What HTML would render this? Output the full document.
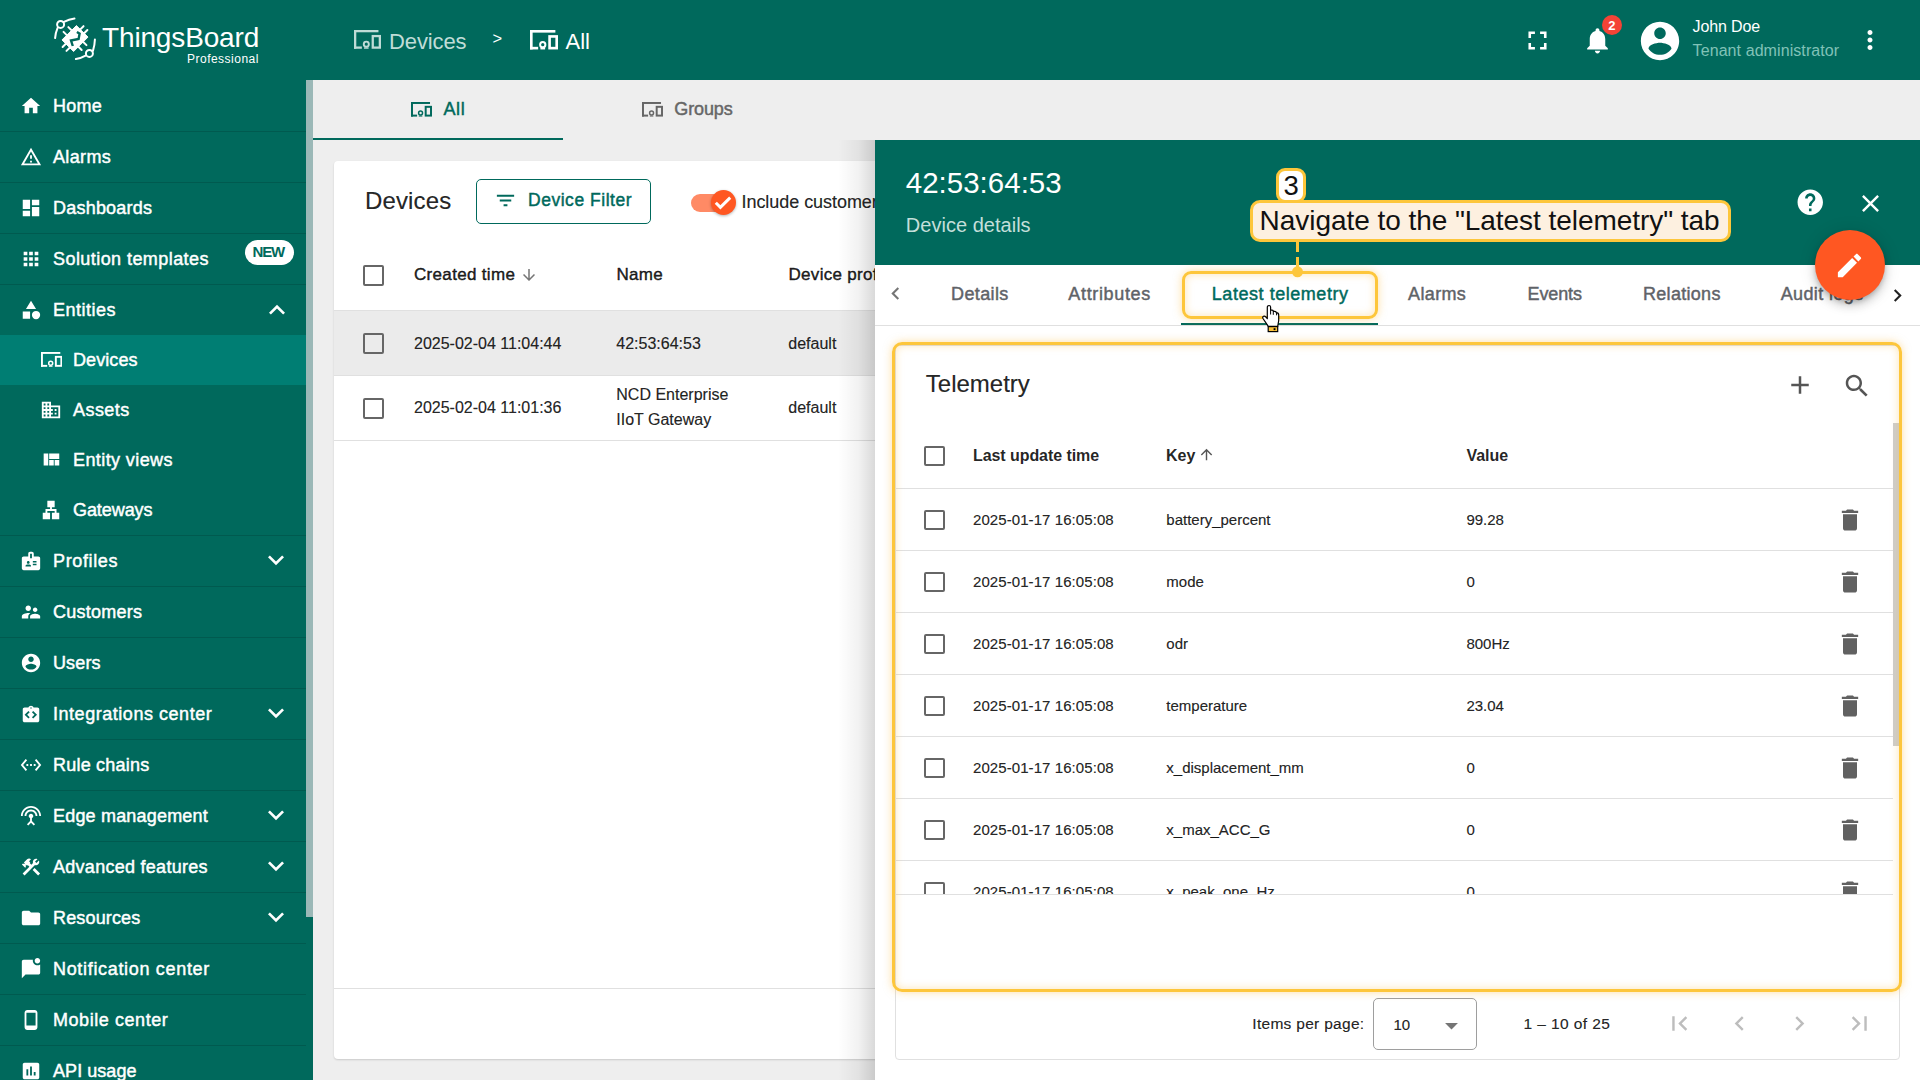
<!DOCTYPE html>
<html><head><meta charset="utf-8">
<style>
*{box-sizing:border-box;margin:0;padding:0}
html,body{width:1920px;height:1080px;overflow:hidden;background:#eeeeee;font-family:"Liberation Sans",sans-serif;color:rgba(0,0,0,.87)}
.abs{position:absolute}
svg{display:block}
.t{position:absolute;white-space:nowrap;line-height:1}
.m{-webkit-text-stroke:0.45px currentColor}
.m2{-webkit-text-stroke:0.2px currentColor}
.cb{position:absolute;border:2px solid #666;border-radius:2px;background:#fff}
</style></head><body>

<div class="abs" style="left:0px;top:0px;width:1920px;height:80px;background:#00695c;"></div>
<svg class="abs" style="left:50px;top:14px" width="50" height="50" viewBox="50 14 50 50">
<g fill="none" stroke="#fff" stroke-width="2" stroke-linecap="round">
<circle cx="60.6" cy="24.4" r="3.5"/><path d="M63.9 21.9Q69 19.3 74.5 18.6"/><path d="M57.6 27.9Q55.6 32.5 55.1 38.1"/>
<circle cx="89.4" cy="53.4" r="3.5"/><path d="M85.6 55.7Q81 58.3 75.9 59.1"/><path d="M93 50.6Q94.7 45.3 94.9 39.5"/>
<path d="M67.51 35.84L63.55 31.88M72.31 31.07L68.35 27.11M79.56 30.14L83.52 26.18M83.43 33.97L87.39 30.01M82.49 41.19L86.45 45.15M77.69 45.99L81.65 49.95M70.44 46.93L66.48 50.89M66.57 43.06L62.61 47.02"/>
</g>
<polygon points="76.4,25.6 88,37.1 73.6,51.5 62,39.9" fill="#fff" stroke="#fff" stroke-width="1" stroke-linejoin="round"/>
<path d="M76.9 32L79.6 33.6L78.6 39L71 40.5L72.8 46" fill="none" stroke="#00695c" stroke-width="2.4"/>
</svg>
<div class="t " style="left:102px;top:24.00px;font-size:28px;color:#fff;font-weight:400;letter-spacing:-0.149px;">ThingsBoard</div>
<div class="t " style="left:187px;top:52.54px;font-size:12px;color:#fff;font-weight:400;letter-spacing:0.485px;">Professional</div>
<svg class="abs" style="left:354px;top:30.2px" width="27" height="18.76" viewBox="0 0 21.3 14.8"><g fill="#bfdcd7"><rect x="0" y="0" width="19.3" height="1.8"/><rect x="0" y="0" width="1.8" height="14.8"/><rect x="0" y="13.0" width="6.2" height="1.8"/><rect x="7.9" y="13.7" width="3.6" height="1.1"/></g><g fill="none" stroke="#bfdcd7" stroke-width="1.8"><rect x="14.8" y="4.8" width="5.6000000000000005" height="9.1"/><circle cx="9.7" cy="11.2" r="2.0" stroke-width="1.5"/></g></svg>
<div class="t " style="left:389px;top:30.78px;font-size:22px;color:#bfdcd7;font-weight:400;letter-spacing:-0.124px;">Devices</div>
<div class="t " style="left:492.5px;top:30.23px;font-size:16.5px;color:#fff;font-weight:400;">&gt;</div>
<svg class="abs" style="left:530.2px;top:30.2px" width="28" height="19.46" viewBox="0 0 21.3 14.8"><g fill="#fff"><rect x="0" y="0" width="19.3" height="2"/><rect x="0" y="0" width="2" height="14.8"/><rect x="0" y="12.8" width="6.2" height="2"/><rect x="7.9" y="13.7" width="3.6" height="1.1"/></g><g fill="none" stroke="#fff" stroke-width="2"><rect x="14.9" y="4.9" width="5.4" height="8.9"/><circle cx="9.7" cy="11.2" r="2.0" stroke-width="1.5"/></g></svg>
<div class="t " style="left:565.5px;top:30.78px;font-size:22px;color:#fff;font-weight:400;">All</div>
<svg class="abs" style="left:1522px;top:24.7px" width="31" height="31" viewBox="0 0 24 24" ><path fill="#fff" d="M7 14H5v5h5v-2H7v-3zm-2-4h2V7h3V5H5v5zm12 7h-3v2h5v-5h-2v3zM14 5v2h3v3h2V5h-5z"/></svg>
<svg class="abs" style="left:1582px;top:24.6px" width="31" height="31" viewBox="0 0 24 24" ><path fill="#fff" d="M12 22c1.1 0 2-.9 2-2h-4c0 1.1.89 2 2 2zm6-6v-5c0-3.07-1.64-5.64-4.5-6.32V4c0-.83-.67-1.5-1.5-1.5s-1.5.67-1.5 1.5v.68C7.63 5.36 6 7.920 6 11v5l-2 2v1h16v-1l-2-2z"/></svg>
<div class="abs" style="left:1602px;top:15px;width:20px;height:20px;background:#f44336;border-radius:50%"></div>
<div class="t " style="left:1608.2px;top:19.00px;font-size:13px;color:#fff;font-weight:700;">2</div>
<svg class="abs" style="left:1637px;top:18px" width="46" height="46" viewBox="0 0 24 24" ><path fill="#fff" d="M12 2C6.48 2 2 6.48 2 12s4.48 10 10 10 10-4.48 10-10S17.52 2 12 2zm0 3c1.66 0 3 1.34 3 3s-1.34 3-3 3-3-1.34-3-3 1.34-3 3-3zm0 14.2c-2.5 0-4.71-1.28-6-3.22.03-1.99 4-3.08 6-3.08 1.99 0 5.97 1.09 6 3.08-1.29 1.94-3.5 3.22-6 3.22z"/></svg>
<div class="t " style="left:1692.6px;top:19.36px;font-size:16px;color:#fff;font-weight:400;letter-spacing:-0.142px;">John Doe</div>
<div class="t " style="left:1692.6px;top:43.21px;font-size:16px;color:#80c2b7;font-weight:400;letter-spacing:0.082px;">Tenant administrator</div>
<svg class="abs" style="left:1855px;top:25px" width="30" height="30" viewBox="0 0 24 24" ><path fill="#fff" d="M12 8c1.1 0 2-.9 2-2s-.9-2-2-2-2 .9-2 2 .9 2 2 2zm0 2c-1.1 0-2 .9-2 2s.9 2 2 2 2-.9 2-2-.9-2-2-2zm0 6c-1.1 0-2 .9-2 2s.9 2 2 2 2-.9 2-2-.9-2-2-2z"/></svg>
<div class="abs" style="left:0px;top:80px;width:306px;height:1000px;background:#00695c;"></div>
<div class="abs" style="left:306px;top:80px;width:7px;height:1000px;background:#00695c;"></div>
<div class="abs" style="left:306px;top:80px;width:7px;height:837px;background:#9bb8b7;"></div>
<div class="abs" style="left:0px;top:335px;width:306px;height:50px;background:#007e73;"></div>
<div class="abs" style="left:0px;top:131px;width:306px;height:1px;background:rgba(0,0,0,.14);"></div>
<div class="abs" style="left:0px;top:182px;width:306px;height:1px;background:rgba(0,0,0,.14);"></div>
<div class="abs" style="left:0px;top:233px;width:306px;height:1px;background:rgba(0,0,0,.14);"></div>
<div class="abs" style="left:0px;top:284px;width:306px;height:1px;background:rgba(0,0,0,.14);"></div>
<div class="abs" style="left:0px;top:535px;width:306px;height:1px;background:rgba(0,0,0,.14);"></div>
<div class="abs" style="left:0px;top:586px;width:306px;height:1px;background:rgba(0,0,0,.14);"></div>
<div class="abs" style="left:0px;top:637px;width:306px;height:1px;background:rgba(0,0,0,.14);"></div>
<div class="abs" style="left:0px;top:688px;width:306px;height:1px;background:rgba(0,0,0,.14);"></div>
<div class="abs" style="left:0px;top:739px;width:306px;height:1px;background:rgba(0,0,0,.14);"></div>
<div class="abs" style="left:0px;top:790px;width:306px;height:1px;background:rgba(0,0,0,.14);"></div>
<div class="abs" style="left:0px;top:841px;width:306px;height:1px;background:rgba(0,0,0,.14);"></div>
<div class="abs" style="left:0px;top:892px;width:306px;height:1px;background:rgba(0,0,0,.14);"></div>
<div class="abs" style="left:0px;top:943px;width:306px;height:1px;background:rgba(0,0,0,.14);"></div>
<div class="abs" style="left:0px;top:994px;width:306px;height:1px;background:rgba(0,0,0,.14);"></div>
<div class="abs" style="left:0px;top:1045px;width:306px;height:1px;background:rgba(0,0,0,.14);"></div>
<svg class="abs" style="left:20px;top:94.5px" width="22" height="22" viewBox="0 0 24 24" ><path fill="#fff" d="M10 20v-6h4v6h5v-8h3L12 3 2 12h3v8z"/></svg>
<div class="t m" style="left:53px;top:96.76px;font-size:18px;color:#fff;font-weight:400;letter-spacing:0.265px;">Home</div>
<svg class="abs" style="left:20px;top:145.5px" width="22" height="22" viewBox="0 0 24 24" ><path fill="#fff" d="M12 5.99L19.53 19H4.47L12 5.99M12 2L1 21h22L12 2zm1 14h-2v2h2v-2zm0-6h-2v4h2v-4z"/></svg>
<div class="t m" style="left:53px;top:147.76px;font-size:18px;color:#fff;font-weight:400;letter-spacing:0.349px;">Alarms</div>
<svg class="abs" style="left:20px;top:196.5px" width="22" height="22" viewBox="0 0 24 24" ><path fill="#fff" d="M3 13h8V3H3v10zm0 8h8v-6H3v6zm10 0h8V11h-8v10zm0-18v6h8V3h-8z"/></svg>
<div class="t m" style="left:53px;top:198.76px;font-size:18px;color:#fff;font-weight:400;letter-spacing:0.216px;">Dashboards</div>
<svg class="abs" style="left:20px;top:247.5px" width="22" height="22" viewBox="0 0 24 24" ><path fill="#fff" d="M4 8h4V4H4v4zm6 12h4v-4h-4v4zm-6 0h4v-4H4v4zm0-6h4v-4H4v4zm6 0h4v-4h-4v4zm6-10v4h4V4h-4zm-6 4h4V4h-4v4zm6 6h4v-4h-4v4zm0 6h4v-4h-4v4z"/></svg>
<div class="t m" style="left:53px;top:249.76px;font-size:18px;color:#fff;font-weight:400;letter-spacing:0.436px;">Solution templates</div>
<svg class="abs" style="left:20px;top:298.5px" width="22" height="22" viewBox="0 0 24 24" ><path fill="#fff" d="M12 2l-5.5 9h11zM17.5 13a4.5 4.5 0 1 0 0 9a4.5 4.5 0 1 0 0-9zM3 13.5h8v8H3z"/></svg>
<div class="t m" style="left:53px;top:300.76px;font-size:18px;color:#fff;font-weight:400;letter-spacing:0.496px;">Entities</div>
<svg class="abs" style="left:40.6px;top:352.2px" width="21.3" height="14.80" viewBox="0 0 21.3 14.8"><g fill="#fff"><rect x="0" y="0" width="19.3" height="1.9"/><rect x="0" y="0" width="1.9" height="14.8"/><rect x="0" y="12.9" width="6.2" height="1.9"/><rect x="7.9" y="13.7" width="3.6" height="1.1"/></g><g fill="none" stroke="#fff" stroke-width="1.9"><rect x="14.85" y="4.85" width="5.5" height="9.0"/><circle cx="9.7" cy="11.2" r="2.0" stroke-width="1.5"/></g></svg>
<div class="t m" style="left:73px;top:351.26px;font-size:18px;color:#fff;font-weight:400;letter-spacing:0.080px;">Devices</div>
<svg class="abs" style="left:40px;top:399.0px" width="22" height="22" viewBox="0 0 24 24" ><path fill="#fff" d="M12 7V3H2v18h20V7H12zM6 19H4v-2h2v2zm0-4H4v-2h2v2zm0-4H4V9h2v2zm0-4H4V5h2v2zm4 12H8v-2h2v2zm0-4H8v-2h2v2zm0-4H8V9h2v2zm0-4H8V5h2v2zm10 12h-8v-2h2v-2h-2v-2h2v-2h-2V9h8v10zm-2-8h-2v2h2v-2zm0 4h-2v2h2v-2z"/></svg>
<div class="t m" style="left:73px;top:401.26px;font-size:18px;color:#fff;font-weight:400;letter-spacing:0.446px;">Assets</div>
<svg class="abs" style="left:40px;top:449.0px" width="22" height="22" viewBox="0 0 24 24" ><path fill="#fff" d="M10 18h5v-6h-5v6zm-6 0h5V5H4v13zm12 0h5v-6h-5v6zM10 5v6h11V5H10z"/></svg>
<div class="t m" style="left:73px;top:451.26px;font-size:18px;color:#fff;font-weight:400;letter-spacing:0.407px;">Entity views</div>
<svg class="abs" style="left:40px;top:499.0px" width="22" height="22" viewBox="0 0 24 24" ><path fill="#fff" d="M13 22h8v-7h-3v-4h-5V9h3V2H8v7h3v2H6v4H3v7h8v-7H8v-2h8v2h-3z"/></svg>
<div class="t m" style="left:73px;top:501.26px;font-size:18px;color:#fff;font-weight:400;letter-spacing:-0.076px;">Gateways</div>
<svg class="abs" style="left:20px;top:549.5px" width="22" height="22" viewBox="0 0 24 24" ><path fill="#fff" d="M20 7h-5V4c0-1.1-.9-2-2-2h-2c-1.1 0-2 .9-2 2v3H4c-1.1 0-2 .9-2 2v11c0 1.1.9 2 2 2h16c1.1 0 2-.9 2-2V9c0-1.1-.9-2-2-2zM9 12c.83 0 1.5.67 1.5 1.5S9.830 15 9 15s-1.5-.67-1.5-1.5S8.17 12 9 12zm3 6H6v-.43c0-.6.36-1.15.92-1.39.64-.28 1.34-.43 2.08-.43s1.44.15 2.08.43c.55.24.92.78.92 1.39V18zm1-9h-2V4h2v5zm5 7.5h-4V15h4v1.5zm0-3h-4V12h4v1.5z"/></svg>
<div class="t m" style="left:53px;top:551.76px;font-size:18px;color:#fff;font-weight:400;letter-spacing:0.640px;">Profiles</div>
<svg class="abs" style="left:20px;top:600.5px" width="22" height="22" viewBox="0 0 24 24" ><path fill="#fff" d="M16.5 12c1.38 0 2.49-1.12 2.49-2.5S17.88 7 16.5 7C15.12 7 14 8.12 14 9.5s1.12 2.5 2.5 2.5zM9 11c1.66 0 2.99-1.34 2.99-3S10.66 5 9 5C7.34 5 6 6.34 6 8s1.34 3 3 3zm7.5 3c-1.83 0-5.5.92-5.5 2.75V19h11v-2.25c0-1.83-3.67-2.75-5.5-2.75zM9 13c-2.33 0-7 1.17-7 3.5V19h7v-2.25c0-.85.33-2.34 2.37-3.47C10.5 13.1 9.66 13 9 13z"/></svg>
<div class="t m" style="left:53px;top:602.76px;font-size:18px;color:#fff;font-weight:400;letter-spacing:0.247px;">Customers</div>
<svg class="abs" style="left:20px;top:651.5px" width="22" height="22" viewBox="0 0 24 24" ><path fill="#fff" d="M12 2C6.48 2 2 6.48 2 12s4.48 10 10 10 10-4.48 10-10S17.52 2 12 2zm0 3c1.66 0 3 1.34 3 3s-1.34 3-3 3-3-1.34-3-3 1.34-3 3-3zm0 14.2c-2.5 0-4.71-1.28-6-3.22.03-1.99 4-3.08 6-3.08 1.99 0 5.97 1.09 6 3.08-1.29 1.94-3.5 3.22-6 3.22z"/></svg>
<div class="t m" style="left:53px;top:653.76px;font-size:18px;color:#fff;font-weight:400;letter-spacing:0.124px;">Users</div>
<svg class="abs" style="left:20px;top:702.5px" width="22" height="22" viewBox="0 0 24 24" ><path fill="#fff" d="M19 5h-4.18C14.4 3.84 13.3 3 12 3s-2.4.84-2.82 2H5c-1.1 0-2 .9-2 2v12c0 1.1.9 2 2 2h14c1.1 0 2-.9 2-2V7c0-1.1-.9-2-2-2zm-7-.25c.41 0 .75.34.75.75s-.34.75-.75.75-.75-.34-.75-.75.34-.75.75-.75zM10.6 15.6L9.2 17 5 12.8l0 0L9.2 8.6l1.4 1.4-2.8 2.8 2.8 2.8zm3.8 1.4L13 15.6l2.8-2.8L13 10l1.4-1.4 4.2 4.2L14.4 17z"/></svg>
<div class="t m" style="left:53px;top:704.76px;font-size:18px;color:#fff;font-weight:400;letter-spacing:0.536px;">Integrations center</div>
<svg class="abs" style="left:20px;top:753.5px" width="22" height="22" viewBox="0 0 24 24" ><path fill="#fff" d="M7.77 6.76L6.23 5.48.82 12l5.41 6.52 1.54-1.28L3.42 12l4.35-5.24zM7 13h2v-2H7v2zm10-2h-2v2h2v-2zm-6 2h2v-2h-2v2zm6.77-7.52l-1.54 1.28L20.58 12l-4.35 5.24 1.54 1.28L23.18 12l-5.41-6.52z"/></svg>
<div class="t m" style="left:53px;top:755.76px;font-size:18px;color:#fff;font-weight:400;letter-spacing:0.220px;">Rule chains</div>
<svg class="abs" style="left:20px;top:804.5px" width="22" height="22" viewBox="0 0 24 24" ><path fill="#fff" d="M12 5c-3.87 0-7 3.13-7 7h2c0-2.76 2.24-5 5-5s5 2.24 5 5h2c0-3.87-3.13-7-7-7zm1 9.29c.88-.39 1.5-1.26 1.5-2.29 0-1.38-1.12-2.5-2.5-2.5S9.5 10.62 9.5 12c0 1.02.62 1.9 1.5 2.29v3.3L7.59 21 9 22.41l3-3 3 3L16.41 21 13 17.59v-3.3zM12 1C5.93 1 1 5.93 1 12h2c0-4.97 4.03-9 9-9s9 4.03 9 9h2c0-6.07-4.93-11-11-11z"/></svg>
<div class="t m" style="left:53px;top:806.76px;font-size:18px;color:#fff;font-weight:400;letter-spacing:0.189px;">Edge management</div>
<svg class="abs" style="left:20px;top:855.5px" width="22" height="22" viewBox="0 0 24 24" ><path fill="#fff" d="M13.783 15.172l2.121-2.121 5.996 5.996-2.121 2.121zM17.5 10c1.93 0 3.5-1.57 3.5-3.5 0-.58-.16-1.12-.41-1.6l-2.7 2.7-1.49-1.490 2.7-2.7c-.48-.25-1.02-.41-1.6-.41C15.57 3 14 4.570 14 6.5c0 .41.08.8.21 1.16l-1.85 1.85-1.78-1.78.71-.71-1.41-1.41L12 3.49c-1.17-1.17-3.07-1.17-4.24 0L4.22 7.03l1.41 1.41H2.810l-.71.71 3.54 3.54.71-.71V9.15l1.41 1.41.71-.71 1.78 1.78-7.41 7.41 2.12 2.12L16.34 9.79c.36.13.75.21 1.16.21z"/></svg>
<div class="t m" style="left:53px;top:857.76px;font-size:18px;color:#fff;font-weight:400;letter-spacing:0.275px;">Advanced features</div>
<svg class="abs" style="left:20px;top:906.5px" width="22" height="22" viewBox="0 0 24 24" ><path fill="#fff" d="M10 4H4c-1.1 0-1.99.9-1.99 2L2 18c0 1.1.9 2 2 2h16c1.1 0 2-.9 2-2V8c0-1.1-.9-2-2-2h-8l-2-2z"/></svg>
<div class="t m" style="left:53px;top:908.76px;font-size:18px;color:#fff;font-weight:400;letter-spacing:0.152px;">Resources</div>
<svg class="abs" style="left:20px;top:957.5px" width="22" height="22" viewBox="0 0 24 24" ><path fill="#fff" d="M22 6.98V16c0 1.1-.9 2-2 2H6l-4 4V4c0-1.1.9-2 2-2h10.1c-.06.32-.1.66-.1 1 0 2.76 2.24 5 5 5 1.13 0 2.16-.39 3-1.02zM16 3c0 1.66 1.34 3 3 3s3-1.34 3-3-1.34-3-3-3-3 1.34-3 3z"/></svg>
<div class="t m" style="left:53px;top:959.76px;font-size:18px;color:#fff;font-weight:400;letter-spacing:0.676px;">Notification center</div>
<svg class="abs" style="left:20px;top:1008.5px" width="22" height="22" viewBox="0 0 24 24" ><path fill="#fff" d="M16 1H8C6.34 1 5 2.34 5 4v16c0 1.66 1.34 3 3 3h8c1.66 0 3-1.34 3-3V4c0-1.66-1.34-3-3-3zm1 17H7V4h10v14z"/></svg>
<div class="t m" style="left:53px;top:1010.76px;font-size:18px;color:#fff;font-weight:400;letter-spacing:0.558px;">Mobile center</div>
<svg class="abs" style="left:20px;top:1059.5px" width="22" height="22" viewBox="0 0 24 24" ><path fill="#fff" d="M19 3H5c-1.1 0-2 .9-2 2v14c0 1.1.9 2 2 2h14c1.1 0 2-.9 2-2V5c0-1.1-.9-2-2-2zM9 17H7v-7h2v7zm4 0h-2V7h2v10zm4 0h-2v-4h2v4z"/></svg>
<div class="t m" style="left:53px;top:1061.76px;font-size:18px;color:#fff;font-weight:400;letter-spacing:0.057px;">API usage</div>
<svg class="abs" style="left:261px;top:293.9px" width="32" height="32" viewBox="0 0 24 24" ><path fill="#fff" d="M12 8l-6 6 1.41 1.41L12 10.83l4.59 4.58L18 14z"/></svg>
<svg class="abs" style="left:259.5px;top:544.1px" width="32" height="32" viewBox="0 0 24 24" ><path fill="#fff" d="M16.59 8.59L12 13.17 7.41 8.59 6 10l6 6 6-6z"/></svg>
<svg class="abs" style="left:259.5px;top:697.1px" width="32" height="32" viewBox="0 0 24 24" ><path fill="#fff" d="M16.59 8.59L12 13.17 7.41 8.59 6 10l6 6 6-6z"/></svg>
<svg class="abs" style="left:259.5px;top:799.1px" width="32" height="32" viewBox="0 0 24 24" ><path fill="#fff" d="M16.59 8.59L12 13.17 7.41 8.59 6 10l6 6 6-6z"/></svg>
<svg class="abs" style="left:259.5px;top:850.1px" width="32" height="32" viewBox="0 0 24 24" ><path fill="#fff" d="M16.59 8.59L12 13.17 7.41 8.59 6 10l6 6 6-6z"/></svg>
<svg class="abs" style="left:259.5px;top:901.1px" width="32" height="32" viewBox="0 0 24 24" ><path fill="#fff" d="M16.59 8.59L12 13.17 7.41 8.59 6 10l6 6 6-6z"/></svg>
<div class="abs" style="left:244.5px;top:239.5px;width:49px;height:25px;background:#fff;border-radius:13px"></div>
<div class="t " style="left:252.5px;top:244.40px;font-size:15px;color:#00695c;font-weight:700;letter-spacing:-1.169px;">NEW</div>
<div class="abs" style="left:313px;top:80px;width:1607px;height:60px;background:#eeeeee;"></div>
<svg class="abs" style="left:411px;top:102px" width="21" height="14.59" viewBox="0 0 21.3 14.8"><g fill="#00695c"><rect x="0" y="0" width="19.3" height="2"/><rect x="0" y="0" width="2" height="14.8"/><rect x="0" y="12.8" width="6.2" height="2"/><rect x="7.9" y="13.7" width="3.6" height="1.1"/></g><g fill="none" stroke="#00695c" stroke-width="2"><rect x="14.9" y="4.9" width="5.4" height="8.9"/><circle cx="9.7" cy="11.2" r="2.0" stroke-width="1.5"/></g></svg>
<div class="t m" style="left:443.4px;top:99.76px;font-size:18px;color:#00695c;font-weight:400;letter-spacing:0.698px;">All</div>
<div class="abs" style="left:313px;top:138px;width:250px;height:2px;background:#00695c;"></div>
<svg class="abs" style="left:642px;top:102px" width="21" height="14.59" viewBox="0 0 21.3 14.8"><g fill="#666"><rect x="0" y="0" width="19.3" height="2"/><rect x="0" y="0" width="2" height="14.8"/><rect x="0" y="12.8" width="6.2" height="2"/><rect x="7.9" y="13.7" width="3.6" height="1.1"/></g><g fill="none" stroke="#666" stroke-width="2"><rect x="14.9" y="4.9" width="5.4" height="8.9"/><circle cx="9.7" cy="11.2" r="2.0" stroke-width="1.5"/></g></svg>
<div class="t m" style="left:674.3px;top:99.76px;font-size:18px;color:#666;font-weight:400;letter-spacing:-0.125px;">Groups</div>
<div class="abs" style="left:334px;top:161px;width:1600px;height:898px;background:#fff;border-radius:4px;box-shadow:0 1px 2px rgba(0,0,0,.15)"></div>
<div class="t m2" style="left:365px;top:188.88px;font-size:24px;color:rgba(0,0,0,.87);font-weight:400;letter-spacing:0.140px;">Devices</div>
<div class="abs" style="left:476px;top:179px;width:175px;height:45px;border:1.3px solid #00695c;border-radius:5px"></div>
<svg class="abs" style="left:494px;top:189px" width="23" height="23" viewBox="0 0 24 24" ><path fill="#00695c" d="M10 18h4v-2h-4v2zM3 6v2h18V6H3zm3 7h12v-2H6v2z"/></svg>
<div class="t m" style="left:528px;top:191.99px;font-size:17.5px;color:#00695c;font-weight:400;letter-spacing:0.524px;">Device Filter</div>
<div class="abs" style="left:691px;top:194px;width:36px;height:18px;background:#ff8a65;border-radius:9px"></div>
<div class="abs" style="left:711px;top:190px;width:25px;height:25px;background:#ff5722;border-radius:50%;box-shadow:0 1px 3px rgba(0,0,0,.3)"></div>
<svg class="abs" style="left:711px;top:190px" width="25" height="25" viewBox="0 0 25 25"><path d="M4.8 12.8l4.6 4.6 9.8-9.8" fill="none" stroke="#fff" stroke-width="3"/></svg>
<div class="t m2" style="left:741.5px;top:192.66px;font-size:18px;color:rgba(0,0,0,.87);font-weight:400;letter-spacing:-0.050px;">Include customer devices</div>
<div class="cb" style="left:363px;top:265px;width:21px;height:21px"></div>
<div class="t m" style="left:414px;top:266.21px;font-size:17px;color:rgba(0,0,0,.87);font-weight:400;letter-spacing:0.321px;">Created time</div>
<svg class="abs" style="left:520px;top:266px" width="18" height="18" viewBox="0 0 24 24" ><path fill="#757575" d="M20 12l-1.41-1.41L13 16.17V4h-2v12.17l-5.58-5.59L4 12l8 8 8-8z"/></svg>
<div class="t m" style="left:616.5px;top:266.21px;font-size:17px;color:rgba(0,0,0,.87);font-weight:400;letter-spacing:0.300px;">Name</div>
<div class="t m" style="left:788.5px;top:266.21px;font-size:17px;color:rgba(0,0,0,.87);font-weight:400;letter-spacing:0.300px;">Device profile</div>
<div class="abs" style="left:334px;top:310px;width:600px;height:1px;background:#e0e0e0;"></div>
<div class="abs" style="left:334px;top:311px;width:600px;height:64px;background:#ebebeb;"></div>
<div class="abs" style="left:334px;top:375px;width:600px;height:1px;background:#e0e0e0;"></div>
<div class="abs" style="left:334px;top:440px;width:600px;height:1px;background:#e0e0e0;"></div>
<div class="cb" style="left:363px;top:333px;width:21px;height:21px;background:transparent"></div>
<div class="cb" style="left:363px;top:398px;width:21px;height:21px"></div>
<div class="t m2" style="left:414px;top:335.71px;font-size:16px;color:rgba(0,0,0,.87);font-weight:400;">2025-02-04 11:04:44</div>
<div class="t m2" style="left:616.3px;top:335.71px;font-size:16px;color:rgba(0,0,0,.87);font-weight:400;">42:53:64:53</div>
<div class="t m2" style="left:788.3px;top:335.71px;font-size:16px;color:rgba(0,0,0,.87);font-weight:400;">default</div>
<div class="t m2" style="left:414px;top:400.21px;font-size:16px;color:rgba(0,0,0,.87);font-weight:400;">2025-02-04 11:01:36</div>
<div class="t m2" style="left:616.3px;top:387.21px;font-size:16px;color:rgba(0,0,0,.87);font-weight:400;">NCD Enterprise</div>
<div class="t m2" style="left:616.3px;top:411.96px;font-size:16px;color:rgba(0,0,0,.87);font-weight:400;">IIoT Gateway</div>
<div class="t m2" style="left:788.3px;top:400.21px;font-size:16px;color:rgba(0,0,0,.87);font-weight:400;">default</div>
<div class="abs" style="left:334px;top:988px;width:600px;height:1px;background:#e0e0e0;"></div>
<div class="abs" style="left:838px;top:140px;width:37px;height:940px;background:linear-gradient(to right,rgba(0,0,0,0),rgba(0,0,0,.05) 55%,rgba(0,0,0,.15))"></div>
<div class="abs" style="left:875px;top:140px;width:1045px;height:940px;background:#fff;"></div>
<div class="abs" style="left:875px;top:140px;width:1045px;height:125px;background:#00695c;"></div>
<div class="t " style="left:905.8px;top:167.73px;font-size:29.5px;color:#fff;font-weight:400;">42:53:64:53</div>
<div class="t " style="left:905.8px;top:214.87px;font-size:20px;color:#c4dfda;font-weight:400;letter-spacing:0.023px;">Device details</div>
<svg class="abs" style="left:1794.5px;top:187.2px" width="30.5" height="30.5" viewBox="0 0 24 24" ><path fill="#fff" d="M12 2C6.48 2 2 6.48 2 12s4.48 10 10 10 10-4.48 10-10S17.52 2 12 2zm1 17h-2v-2h2v2zm2.07-7.75l-.9.92C13.45 12.9 13 13.5 13 15h-2v-.5c0-1.1.45-2.1 1.17-2.83l1.24-1.26c.37-.36.59-.86.59-1.41 0-1.1-.9-2-2-2s-2 .9-2 2H8c0-2.21 1.79-4 4-4s4 1.79 4 4c0 .88-.36 1.68-.93 2.25z"/></svg>
<svg class="abs" style="left:1855.5px;top:188.8px" width="29" height="29" viewBox="0 0 24 24" ><path fill="#fff" d="M19 6.41L17.590 5 12 10.59 6.41 5 5 6.41 10.59 12 5 17.59 6.41 19 12 13.41 17.59 19 19 17.59 13.41 12z"/></svg>
<div class="abs" style="left:875px;top:325px;width:1045px;height:1px;background:#e0e0e0;"></div>
<svg class="abs" style="left:883px;top:281px" width="25" height="25" viewBox="0 0 24 24" ><path fill="#757575" d="M15.41 7.41L14 6l-6 6 6 6 1.41-1.41L10.83 12z"/></svg>
<svg class="abs" style="left:1885px;top:282.5px" width="25" height="25" viewBox="0 0 24 24" ><path fill="rgba(0,0,0,.87)" d="M10 6L8.59 7.41 13.17 12l-4.58 4.59L10 18l6-6z"/></svg>
<div class="t m" style="left:951.1px;top:284.76px;font-size:18px;color:#5f6368;font-weight:400;letter-spacing:0.363px;">Details</div>
<div class="t m" style="left:1068.3px;top:284.76px;font-size:18px;color:#5f6368;font-weight:400;letter-spacing:0.663px;">Attributes</div>
<div class="t m" style="left:1211.8px;top:284.76px;font-size:18px;color:#00695c;font-weight:400;letter-spacing:0.543px;">Latest telemetry</div>
<div class="t m" style="left:1408.1px;top:284.76px;font-size:18px;color:#5f6368;font-weight:400;letter-spacing:0.339px;">Alarms</div>
<div class="t m" style="left:1527.6px;top:284.76px;font-size:18px;color:#5f6368;font-weight:400;letter-spacing:-0.126px;">Events</div>
<div class="t m" style="left:1643px;top:284.76px;font-size:18px;color:#5f6368;font-weight:400;letter-spacing:0.295px;">Relations</div>
<div class="t m" style="left:1780.7px;top:284.76px;font-size:18px;color:#5f6368;font-weight:400;letter-spacing:0.383px;">Audit logs</div>
<div class="abs" style="left:1181px;top:323px;width:197px;height:2.2px;background:#00695c;"></div>
<div class="abs" style="left:1815px;top:230px;width:70px;height:70px;border-radius:50%;background:#ff5722;box-shadow:0 3px 5px -1px rgba(0,0,0,.2),0 6px 10px 0 rgba(0,0,0,.14),0 1px 18px 0 rgba(0,0,0,.12)"></div>
<svg class="abs" style="left:1834px;top:250px" width="31" height="31" viewBox="0 0 24 24" ><path fill="#fff" d="M3 17.25V21h3.75L17.81 9.94l-3.75-3.75L3 17.25zM20.71 7.04c.39-.39.39-1.02 0-1.41l-2.34-2.34c-.39-.39-1.02-.39-1.41 0l-1.83 1.83 3.75 3.75 1.83-1.83z"/></svg>
<div class="abs" style="left:895px;top:345px;width:1005px;height:715px;border:1px solid #e0e0e0;border-radius:4px;background:#fff"></div>
<div class="t m2" style="left:925.8px;top:372.18px;font-size:24px;color:rgba(0,0,0,.87);font-weight:400;">Telemetry</div>
<svg class="abs" style="left:1784.7px;top:369.7px" width="30" height="30" viewBox="0 0 24 24" ><path fill="#555" d="M19 13h-6v6h-2v-6H5v-2h6V5h2v6h6v2z"/></svg>
<svg class="abs" style="left:1842px;top:371px" width="30" height="30" viewBox="0 0 24 24" ><path fill="#555" d="M15.5 14h-.79l-.28-.27C15.41 12.59 16 11.11 16 9.5 16 5.91 13.09 3 9.5 3S3 5.91 3 9.5 5.91 16 9.5 16c1.61 0 3.09-.59 4.23-1.57l.27.28v.79l5 4.99L20.49 19l-4.99-5zm-6 0C7.01 14 5 11.99 5 9.5S7.01 5 9.5 5 14 7.01 14 9.5 11.99 14 9.5 14z"/></svg>
<div class="cb" style="left:924px;top:446px;width:20.5px;height:20px"></div>
<div class="t " style="left:973px;top:447.71px;font-size:16px;color:rgba(0,0,0,.87);font-weight:700;letter-spacing:-0.069px;">Last update time</div>
<div class="t " style="left:1166px;top:447.71px;font-size:16px;color:rgba(0,0,0,.87);font-weight:700;">Key</div>
<svg class="abs" style="left:1197.6px;top:446.2px" width="17" height="17" viewBox="0 0 24 24" ><path fill="#555" d="M4 12l1.41 1.41L11 7.83V20h2V7.83l5.58 5.59L20 12l-8-8-8 8z"/></svg>
<div class="t " style="left:1466.4px;top:447.71px;font-size:16px;color:rgba(0,0,0,.87);font-weight:700;">Value</div>
<div class="abs" style="left:896px;top:488px;width:997px;height:1px;background:#e0e0e0;"></div>
<div class="abs" style="left:896px;top:489px;width:997px;height:405px;overflow:hidden">
<div class="cb" style="left:28px;top:20.5px;width:20.5px;height:20px"></div>
<div class="t m2" style="left:77px;top:23.30px;font-size:15px;color:rgba(0,0,0,.87);font-weight:400;letter-spacing:0.075px;">2025-01-17 16:05:08</div>
<div class="t m2" style="left:270.29999999999995px;top:23.30px;font-size:15px;color:rgba(0,0,0,.87);font-weight:400;">battery_percent</div>
<div class="t m2" style="left:570.4000000000001px;top:23.30px;font-size:15px;color:rgba(0,0,0,.87);font-weight:400;">99.28</div>
<svg class="abs" style="left:940px;top:17px" width="28" height="28" viewBox="0 0 24 24" ><path fill="#616161" d="M6 19c0 1.1.9 2 2 2h8c1.1 0 2-.9 2-2V7H6v12zM19 4h-3.5l-1-1h-5l-1 1H5v2h14V4z"/></svg>
<div class="abs" style="left:0px;top:61px;width:997px;height:1px;background:#e0e0e0;"></div>
<div class="cb" style="left:28px;top:82.5px;width:20.5px;height:20px"></div>
<div class="t m2" style="left:77px;top:85.30px;font-size:15px;color:rgba(0,0,0,.87);font-weight:400;letter-spacing:0.075px;">2025-01-17 16:05:08</div>
<div class="t m2" style="left:270.29999999999995px;top:85.30px;font-size:15px;color:rgba(0,0,0,.87);font-weight:400;">mode</div>
<div class="t m2" style="left:570.4000000000001px;top:85.30px;font-size:15px;color:rgba(0,0,0,.87);font-weight:400;">0</div>
<svg class="abs" style="left:940px;top:79px" width="28" height="28" viewBox="0 0 24 24" ><path fill="#616161" d="M6 19c0 1.1.9 2 2 2h8c1.1 0 2-.9 2-2V7H6v12zM19 4h-3.5l-1-1h-5l-1 1H5v2h14V4z"/></svg>
<div class="abs" style="left:0px;top:123px;width:997px;height:1px;background:#e0e0e0;"></div>
<div class="cb" style="left:28px;top:144.5px;width:20.5px;height:20px"></div>
<div class="t m2" style="left:77px;top:147.30px;font-size:15px;color:rgba(0,0,0,.87);font-weight:400;letter-spacing:0.075px;">2025-01-17 16:05:08</div>
<div class="t m2" style="left:270.29999999999995px;top:147.30px;font-size:15px;color:rgba(0,0,0,.87);font-weight:400;">odr</div>
<div class="t m2" style="left:570.4000000000001px;top:147.30px;font-size:15px;color:rgba(0,0,0,.87);font-weight:400;">800Hz</div>
<svg class="abs" style="left:940px;top:141px" width="28" height="28" viewBox="0 0 24 24" ><path fill="#616161" d="M6 19c0 1.1.9 2 2 2h8c1.1 0 2-.9 2-2V7H6v12zM19 4h-3.5l-1-1h-5l-1 1H5v2h14V4z"/></svg>
<div class="abs" style="left:0px;top:185px;width:997px;height:1px;background:#e0e0e0;"></div>
<div class="cb" style="left:28px;top:206.5px;width:20.5px;height:20px"></div>
<div class="t m2" style="left:77px;top:209.30px;font-size:15px;color:rgba(0,0,0,.87);font-weight:400;letter-spacing:0.075px;">2025-01-17 16:05:08</div>
<div class="t m2" style="left:270.29999999999995px;top:209.30px;font-size:15px;color:rgba(0,0,0,.87);font-weight:400;">temperature</div>
<div class="t m2" style="left:570.4000000000001px;top:209.30px;font-size:15px;color:rgba(0,0,0,.87);font-weight:400;">23.04</div>
<svg class="abs" style="left:940px;top:203px" width="28" height="28" viewBox="0 0 24 24" ><path fill="#616161" d="M6 19c0 1.1.9 2 2 2h8c1.1 0 2-.9 2-2V7H6v12zM19 4h-3.5l-1-1h-5l-1 1H5v2h14V4z"/></svg>
<div class="abs" style="left:0px;top:247px;width:997px;height:1px;background:#e0e0e0;"></div>
<div class="cb" style="left:28px;top:268.5px;width:20.5px;height:20px"></div>
<div class="t m2" style="left:77px;top:271.30px;font-size:15px;color:rgba(0,0,0,.87);font-weight:400;letter-spacing:0.075px;">2025-01-17 16:05:08</div>
<div class="t m2" style="left:270.29999999999995px;top:271.30px;font-size:15px;color:rgba(0,0,0,.87);font-weight:400;">x_displacement_mm</div>
<div class="t m2" style="left:570.4000000000001px;top:271.30px;font-size:15px;color:rgba(0,0,0,.87);font-weight:400;">0</div>
<svg class="abs" style="left:940px;top:265px" width="28" height="28" viewBox="0 0 24 24" ><path fill="#616161" d="M6 19c0 1.1.9 2 2 2h8c1.1 0 2-.9 2-2V7H6v12zM19 4h-3.5l-1-1h-5l-1 1H5v2h14V4z"/></svg>
<div class="abs" style="left:0px;top:309px;width:997px;height:1px;background:#e0e0e0;"></div>
<div class="cb" style="left:28px;top:330.5px;width:20.5px;height:20px"></div>
<div class="t m2" style="left:77px;top:333.30px;font-size:15px;color:rgba(0,0,0,.87);font-weight:400;letter-spacing:0.075px;">2025-01-17 16:05:08</div>
<div class="t m2" style="left:270.29999999999995px;top:333.30px;font-size:15px;color:rgba(0,0,0,.87);font-weight:400;">x_max_ACC_G</div>
<div class="t m2" style="left:570.4000000000001px;top:333.30px;font-size:15px;color:rgba(0,0,0,.87);font-weight:400;">0</div>
<svg class="abs" style="left:940px;top:327px" width="28" height="28" viewBox="0 0 24 24" ><path fill="#616161" d="M6 19c0 1.1.9 2 2 2h8c1.1 0 2-.9 2-2V7H6v12zM19 4h-3.5l-1-1h-5l-1 1H5v2h14V4z"/></svg>
<div class="abs" style="left:0px;top:371px;width:997px;height:1px;background:#e0e0e0;"></div>
<div class="cb" style="left:28px;top:392.5px;width:20.5px;height:20px"></div>
<div class="t m2" style="left:77px;top:395.30px;font-size:15px;color:rgba(0,0,0,.87);font-weight:400;letter-spacing:0.075px;">2025-01-17 16:05:08</div>
<div class="t m2" style="left:270.29999999999995px;top:395.30px;font-size:15px;color:rgba(0,0,0,.87);font-weight:400;">x_peak_one_Hz</div>
<div class="t m2" style="left:570.4000000000001px;top:395.30px;font-size:15px;color:rgba(0,0,0,.87);font-weight:400;">0</div>
<svg class="abs" style="left:940px;top:389px" width="28" height="28" viewBox="0 0 24 24" ><path fill="#616161" d="M6 19c0 1.1.9 2 2 2h8c1.1 0 2-.9 2-2V7H6v12zM19 4h-3.5l-1-1h-5l-1 1H5v2h14V4z"/></svg>
<div class="abs" style="left:0px;top:433px;width:997px;height:1px;background:#e0e0e0;"></div>
</div>
<div class="abs" style="left:896px;top:894px;width:997px;height:1px;background:#e0e0e0;"></div>
<div class="abs" style="left:1892.5px;top:423px;width:6.5px;height:322.6px;background:#cdcdcd;"></div>
<div class="t m2" style="left:1252.3px;top:1016.48px;font-size:15.5px;color:rgba(0,0,0,.87);font-weight:400;letter-spacing:0.293px;">Items per page:</div>
<div class="abs" style="left:1372.5px;top:998px;width:104px;height:51.5px;border:1px solid #9e9e9e;border-radius:5px"></div>
<div class="t m2" style="left:1393.5px;top:1016.50px;font-size:15px;color:rgba(0,0,0,.87);font-weight:400;">10</div>
<svg class="abs" style="left:1436px;top:1009.6px" width="31" height="31" viewBox="0 0 24 24" ><path fill="#757575" d="M7 10l5 5 5-5z"/></svg>
<div class="t m2" style="left:1523.6px;top:1016.08px;font-size:15.5px;color:rgba(0,0,0,.87);font-weight:400;letter-spacing:0.404px;">1 – 10 of 25</div>
<svg class="abs" style="left:1664.7px;top:1009px" width="29" height="29" viewBox="0 0 24 24" ><path fill="#bdbdbd" d="M18.41 16.59L13.82 12l4.59-4.59L17 6l-6 6 6 6zM6 6h2v12H6z"/></svg>
<svg class="abs" style="left:1724.5px;top:1009px" width="29" height="29" viewBox="0 0 24 24" ><path fill="#bdbdbd" d="M15.41 7.41L14 6l-6 6 6 6 1.41-1.41L10.83 12z"/></svg>
<svg class="abs" style="left:1784.5px;top:1009px" width="29" height="29" viewBox="0 0 24 24" ><path fill="#bdbdbd" d="M10 6L8.59 7.41 13.17 12l-4.58 4.59L10 18l6-6z"/></svg>
<svg class="abs" style="left:1844.5px;top:1009px" width="29" height="29" viewBox="0 0 24 24" ><path fill="#bdbdbd" d="M5.59 7.41L10.18 12l-4.59 4.59L7 18l6-6-6-6zM16 6h2v12h-2z"/></svg>
<div class="abs" style="left:892px;top:342px;width:1010px;height:650px;border:3px solid #fdc63b;border-radius:10px;box-shadow:0 0 8px rgba(253,190,70,.5),inset 0 0 8px rgba(253,190,70,.4)"></div>
<div class="abs" style="left:1182px;top:271px;width:196px;height:48px;border:3.2px solid #fdc63b;border-radius:9px;box-shadow:0 0 8px rgba(253,190,70,.5),inset 0 0 8px rgba(253,190,70,.4)"></div>
<svg class="abs" style="left:1290px;top:240px" width="16" height="40" viewBox="0 0 16 40"><line x1="7.5" y1="2" x2="7.5" y2="31" stroke="#fdc63b" stroke-width="3" stroke-dasharray="10,5"/><circle cx="7.5" cy="31.8" r="5.5" fill="#fdc63b"/></svg>
<div class="abs" style="left:1250px;top:200px;width:481px;height:42px;border:3px solid #fdc63b;border-radius:10px;background:#fdf0e0"></div>
<div class="t " style="left:1259.6px;top:206.70px;font-size:28px;color:#111;font-weight:400;letter-spacing:-0.050px;">Navigate to the "Latest telemetry" tab</div>
<div class="abs" style="left:1276px;top:168px;width:30px;height:35px;border:3px solid #fdc63b;border-radius:9px;background:#fff"></div>
<div class="t " style="left:1283.5px;top:171.62px;font-size:27.5px;color:#111;font-weight:400;">3</div>
<svg class="abs" style="left:1258px;top:303px" width="26" height="32" viewBox="0 0 26 32">
<path d="M9.3 4.2c0-.9.8-1.7 1.7-1.7s1.6.8 1.6 1.7V7.2h1.5c.8 0 1.3.5 1.3 1.2h1.4c.9 0 1.5.6 1.5 1.3c1.4 0 2.4.9 2.4 2.3V17.5L19.7 23.3H10.3L5 15.5c-.5-.8-.3-1.8.5-2.2.8-.4 1.600-.2 2.2.5l1.6 1.9V4.2z" fill="#fff" stroke="#000" stroke-width="1.2" stroke-linejoin="round"/>
<path d="M12.6 7.2v4.3M15.3 8.4v3.4M18.6 9.7v2.6" stroke="#000" stroke-width="1"/>
<rect x="10.2" y="23.6" width="9.5" height="5" fill="#fbc23a" stroke="#000" stroke-width="1.2"/>
<rect x="15.6" y="25.2" width="1.9" height="1.9" fill="#000"/>
</svg>
</body></html>
